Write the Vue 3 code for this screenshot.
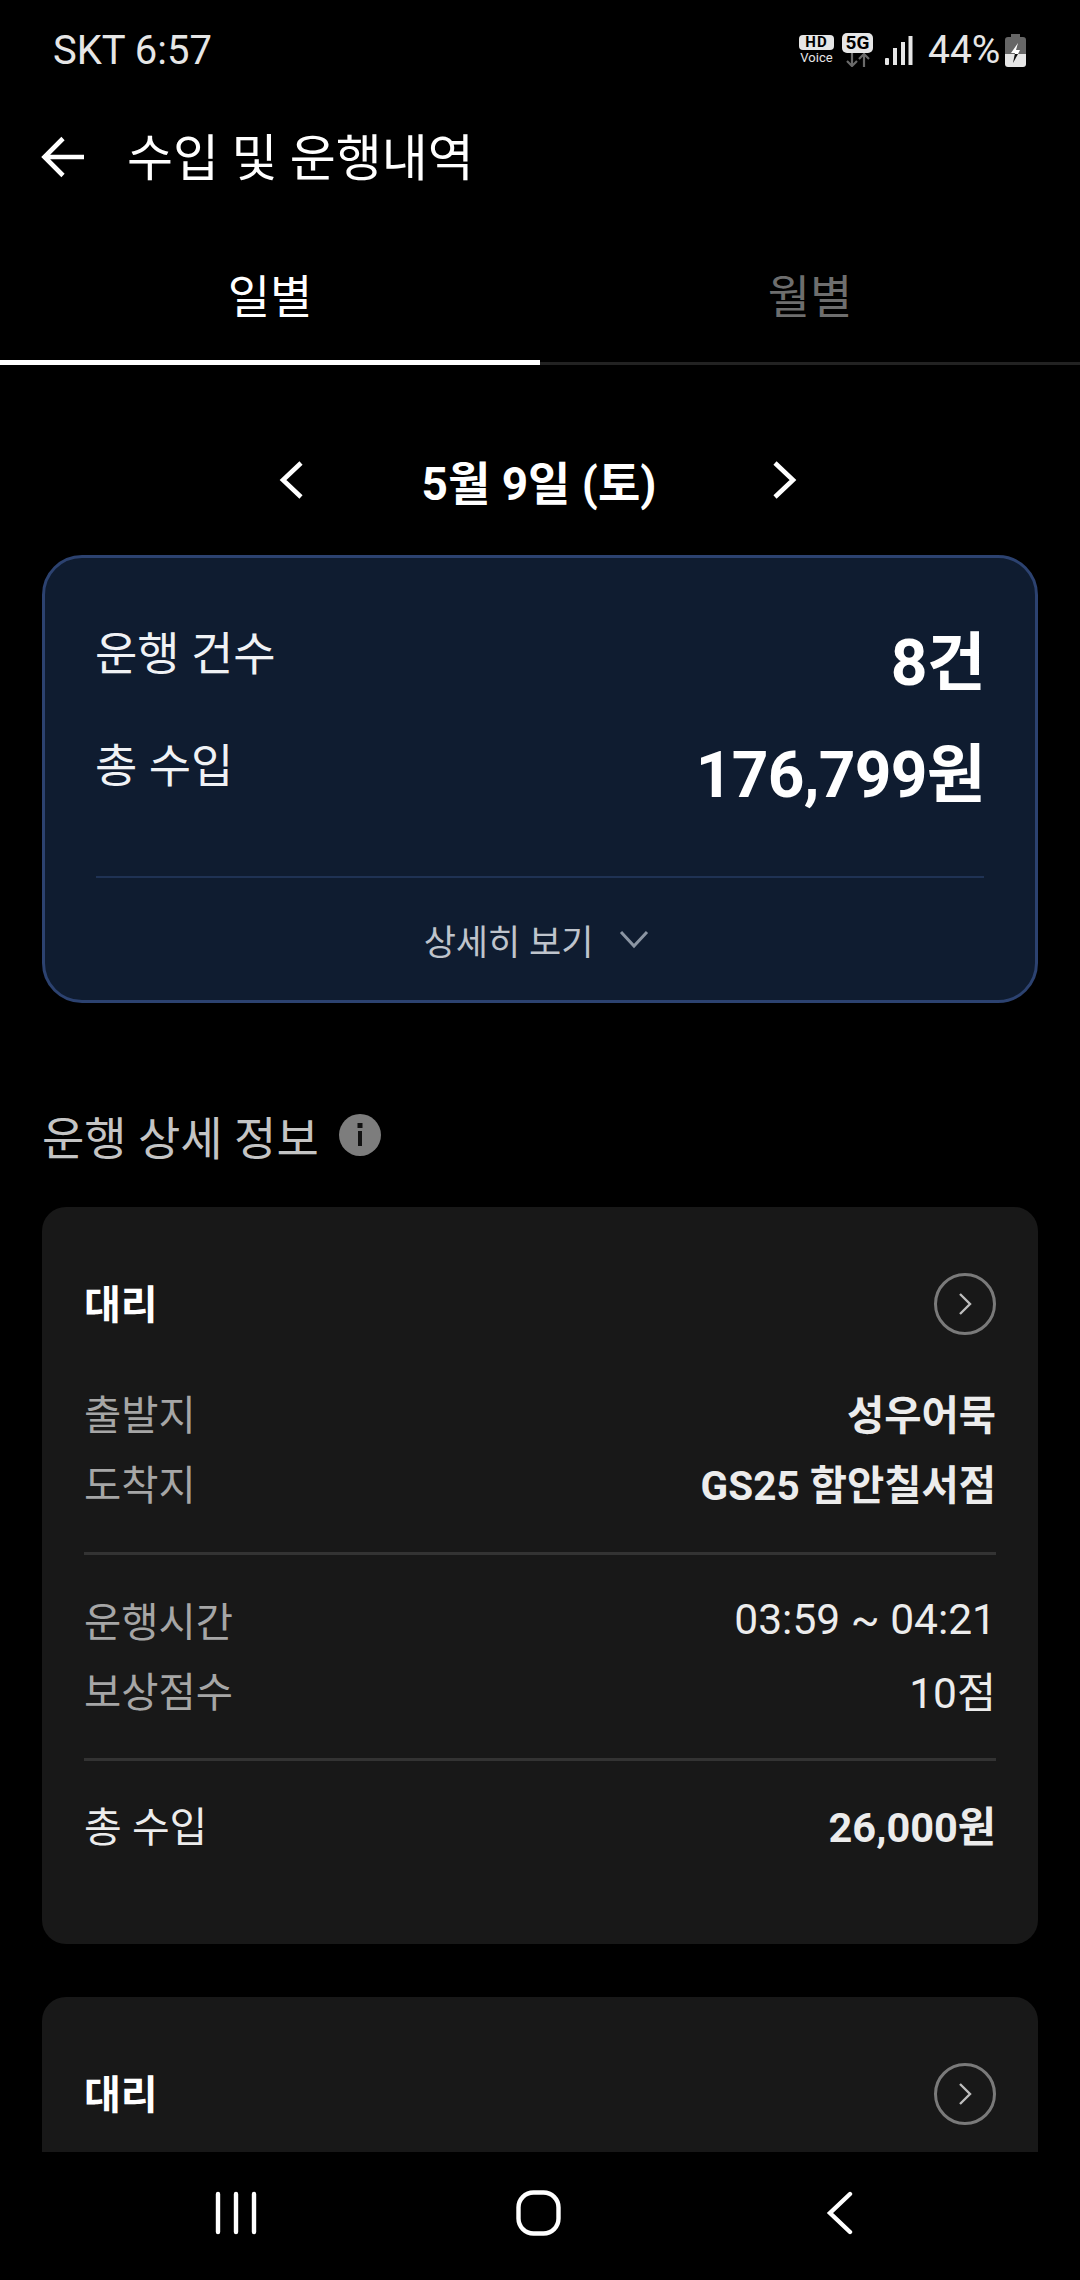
<script setup>
const rows = [
  [
    { label: '출발지', value: '성우어묵', strong: true },
    { label: '도착지', value: 'GS25 함안칠서점', strong: true },
  ],
  [
    { label: '운행시간', value: '03:59 ~ 04:21' },
    { label: '보상점수', value: '10점' },
  ],
]
</script>

<template>
  <div class="screen">
    <div class="status-bar">
      <span class="carrier">SKT 6:57</span>
      <div class="status-icons">
        <div class="hd">
          <span class="hd-badge">HD</span>
          <span class="hd-voice">Voice</span>
        </div>
        <div class="net">
          <span class="net-badge">5G</span>
          <svg width="24" height="14" viewBox="0 0 24 14" fill="none" stroke="#6a6a6a" stroke-width="2.2">
            <path d="M6 0v13M1 8l5 5 5-5" />
            <path d="M18 14V1M13 6l5-5 5 5" />
          </svg>
        </div>
        <svg class="signal" width="28" height="29" viewBox="0 0 28 29" fill="#e6e6e6">
          <rect x="0" y="22" width="4" height="7" rx="1" />
          <rect x="8" y="12" width="4" height="17" />
          <rect x="16" y="6" width="4" height="23" />
          <rect x="23.500" y="0" width="4" height="29" />
        </svg>
        <span class="battery-text">44%</span>
        <svg width="21" height="33" viewBox="0 0 21 33">
          <path d="M6 0h9v3h3a3 3 0 0 1 3 3v14H0V6a3 3 0 0 1 3-3h3z" fill="#666" />
          <path d="M0 20h21v10a3 3 0 0 1-3 3H3a3 3 0 0 1-3-3z" fill="#e6e6e6" />
          <path d="M13 9L6 19h4l-.2 1H13l2-4h-4z" fill="#fff" />
          <path d="M9.800 20L8 29l5-9z" fill="#111" />
        </svg>
      </div>
    </div>

    <header class="app-bar">
      <svg width="46" height="46" viewBox="0 0 46 46" fill="none" stroke="#fff" stroke-width="4.6">
        <path d="M43 23H4M22 4.500L3.500 23 22 41.500" />
      </svg>
      <h1>수입 및 운행내역</h1>
    </header>

    <nav class="tabs">
      <div class="tab active">일별</div>
      <div class="tab">월별</div>
    </nav>

    <main class="content">
      <div class="date-row">
        <svg width="28" height="38" viewBox="0 0 28 38" fill="none" stroke="#fff" stroke-width="4.600">
          <path d="M23 2L5 19l18 17" />
        </svg>
        <span class="date">5월 9일 (토)</span>
        <svg width="28" height="38" viewBox="0 0 28 38" fill="none" stroke="#fff" stroke-width="4.600">
          <path d="M5 2l18 17L5 36" />
        </svg>
      </div>

      <section class="summary">
        <div class="summary-body">
          <div class="summary-row">
            <span class="summary-label">운행 건수</span>
            <span class="summary-value">8건</span>
          </div>
          <div class="summary-row">
            <span class="summary-label">총 수입</span>
            <span class="summary-value">176,799원</span>
          </div>
        </div>
        <div class="summary-more">
          <span>상세히 보기</span>
          <svg width="30" height="20" viewBox="0 0 30 20" fill="none" stroke="#8b95a3" stroke-width="3">
            <path d="M2 3l13 14L28 3" />
          </svg>
        </div>
      </section>

      <div class="section-title">
        <span>운행 상세 정보</span>
        <svg width="42" height="42" viewBox="0 0 42 42">
          <circle cx="21" cy="21" r="21" fill="#7d7d7d" />
          <rect x="18.500" y="9" width="5" height="5" fill="#111" />
          <rect x="19" y="17" width="4" height="15" fill="#111" />
        </svg>
      </div>

      <section class="trip">
        <div class="trip-head">
          <span class="trip-name">대리</span>
          <span class="go">
            <svg width="14" height="24" viewBox="0 0 14 24" fill="none" stroke="#bdbdbd" stroke-width="2.400">
              <path d="M2 2l10 10L2 22" />
            </svg>
          </span>
        </div>
        <div v-for="(group, i) in rows" :key="i" class="trip-group">
          <div v-for="row in group" :key="row.label" class="trip-row">
            <span class="trip-label">{{ row.label }}</span>
            <span :class="['trip-value', { strong: row.strong }]">{{ row.value }}</span>
          </div>
        </div>
        <div class="trip-total">
          <span>총 수입</span>
          <span class="trip-amount">26,000원</span>
        </div>
      </section>

      <section class="trip">
        <div class="trip-head">
          <span class="trip-name">대리</span>
          <span class="go">
            <svg width="14" height="24" viewBox="0 0 14 24" fill="none" stroke="#bdbdbd" stroke-width="2.400">
              <path d="M2 2l10 10L2 22" />
            </svg>
          </span>
        </div>
      </section>
    </main>

    <footer class="nav-bar">
      <svg width="42" height="44" viewBox="0 0 42 44" fill="none" stroke="#fff" stroke-width="4.400" stroke-linecap="round">
        <path d="M3 3v38M21 3v38M39 3v38" />
      </svg>
      <svg width="45" height="46" viewBox="0 0 45 46" fill="none" stroke="#fff" stroke-width="4.400">
        <rect x="2.500" y="2.500" width="40" height="41" rx="15" />
      </svg>
      <svg width="28" height="44" viewBox="0 0 28 44" fill="none" stroke="#fff" stroke-width="4.400" stroke-linecap="round">
        <path d="M24 3L4 22l20 19" />
      </svg>
    </footer>
  </div>
</template>

<style>
html, body { background: #000; }
</style>

<style scoped>
.screen {
  width: 1080px;
  height: 2280px;
  background: #000;
  color: #fff;
  display: flex;
  flex-direction: column;
  overflow: hidden;
  font-family: Roboto, "Noto Sans CJK KR", sans-serif;
}
.status-bar {
  height: 100px;
  flex: none;
  box-sizing: border-box;
  display: flex;
  justify-content: space-between;
  align-items: center;
  padding: 0 54px 0 53px;
  color: #e6e6e6;
}
.carrier { font-size: 40px; }
.status-icons { display: flex; align-items: center; }
.hd { display: flex; flex-direction: column; align-items: center; width: 35px; margin-right: 8px; }
.hd-badge {
  width: 35px;
  height: 15px;
  background: #e6e6e6;
  color: #000;
  border-radius: 4px;
  font-size: 15px;
  line-height: 15px;
  font-weight: 700;
  letter-spacing: 1px;
  text-align: center;
}
.hd-voice { font-size: 13px; line-height: 16px; color: #e6e6e6; }
.net { display: flex; flex-direction: column; align-items: center; width: 31px; margin-right: 12px; }
.net-badge {
  width: 31px;
  height: 20px;
  background: #e6e6e6;
  color: #000;
  border-radius: 5px;
  font-size: 19px;
  line-height: 20px;
  font-weight: 700;
  text-align: center;
}
.signal { margin-right: 16px; }
.battery-text { font-size: 39px; width: 70px; margin-right: 7px; margin-left: -1px; white-space: nowrap; }
.app-bar {
  height: 114px;
  flex: none;
  display: flex;
  align-items: center;
  padding-left: 41px;
  gap: 40px;
}
.app-bar h1 {
  margin: 0;
  padding-bottom: 6px;
  font-size: 50px;
  font-weight: 400;
}
.tabs { display: flex; flex: none; height: 148px; border-bottom: 3px solid #222; }
.tab {
  flex: 1;
  display: flex;
  align-items: center;
  justify-content: center;
  font-size: 46px;
  color: #6e6e6e;
  padding-top: 10px;
}
.tab.active {
  color: #fff;
  position: relative;
}
.tab.active::after {
  content: "";
  position: absolute;
  left: 0;
  right: 0;
  bottom: -3px;
  height: 5px;
  background: #fff;
}
.content { flex: 1; min-height: 0; overflow: hidden; padding: 0 42px; }
.date-row {
  height: 190px;
  box-sizing: border-box;
  padding: 40px 4px 0 0;
  display: flex;
  align-items: center;
  justify-content: center;
}
.date {
  width: 464px;
  text-align: center;
  font-size: 46px;
  font-weight: 700;
  padding-left: 2px;
  box-sizing: border-box;
}
.summary {
  height: 448px;
  box-sizing: border-box;
  background: #0f1c30;
  border: 3px solid #2c4270;
  border-radius: 40px;
  padding: 0 51px;
  display: flex;
  flex-direction: column;
}
.summary-body {
  height: 320px;
  flex: none;
  border-bottom: 2px solid #1f3254;
  padding-top: 67px;
  box-sizing: border-box;
  display: flex;
  flex-direction: column;
  gap: 34px;
}
.summary-row { display: flex; justify-content: space-between; align-items: flex-start; }
.summary-label { font-size: 46px; line-height: 78px; color: #f0f2f5; margin: -10px 0 0 -1px; }
.summary-value { font-size: 64px; line-height: 78px; font-weight: 700; letter-spacing: -0.7px; margin-right: -1px; }
.summary-more {
  flex: 1;
  display: flex;
  align-items: center;
  justify-content: center;
  gap: 26px;
  padding-right: 7px;
  font-size: 35px;
  color: #bfc4cc;
}
.section-title {
  display: flex;
  align-items: center;
  gap: 20px;
  height: 60px;
  margin: 102px 0 42px;
  font-size: 46px;
  color: #c4c4c4;
}
.trip {
  background: #181818;
  border-radius: 24px;
  padding: 50px 42px 0;
  margin-bottom: 53px;
  height: 737px;
  box-sizing: border-box;
}
.trip-head {
  display: flex;
  justify-content: space-between;
  align-items: center;
  height: 94px;
  font-size: 40px;
  font-weight: 700;
}
.trip-name { padding-bottom: 4px; }
.go {
  width: 62px;
  height: 62px;
  box-sizing: border-box;
  border: 3px solid #7a7a7a;
  border-radius: 50%;
  display: flex;
  align-items: center;
  justify-content: center;
}
.trip-group {
  display: flex;
  flex-direction: column;
  padding-top: 31px;
  border-bottom: 3px solid #333;
  height: 206px;
  box-sizing: border-box;
}
.trip-head + .trip-group { height: 204px; padding-top: 28px; }
.trip-row {
  display: flex;
  justify-content: space-between;
  align-items: center;
  height: 70px;
  padding-bottom: 3px;
  box-sizing: border-box;
}
.trip-label { font-size: 40.5px; color: #a6a6a6; }
.trip-value { font-size: 42.5px; color: #ececec; }
.trip-value.strong { font-size: 40.5px; font-weight: 700; }
.trip-total {
  display: flex;
  justify-content: space-between;
  align-items: center;
  height: 130px;
  padding-bottom: 4px;
  box-sizing: border-box;
  font-size: 41px;
  color: #ececec;
}
.trip-amount { font-weight: 700; font-size: 41.5px; }
.nav-bar {
  height: 128px;
  flex: none;
  background: #000;
  display: grid;
  grid-template-columns: 302px 302px 302px;
  align-items: center;
  justify-items: center;
  box-sizing: border-box;
  padding: 0 0 6px 85px;
}
</style>
